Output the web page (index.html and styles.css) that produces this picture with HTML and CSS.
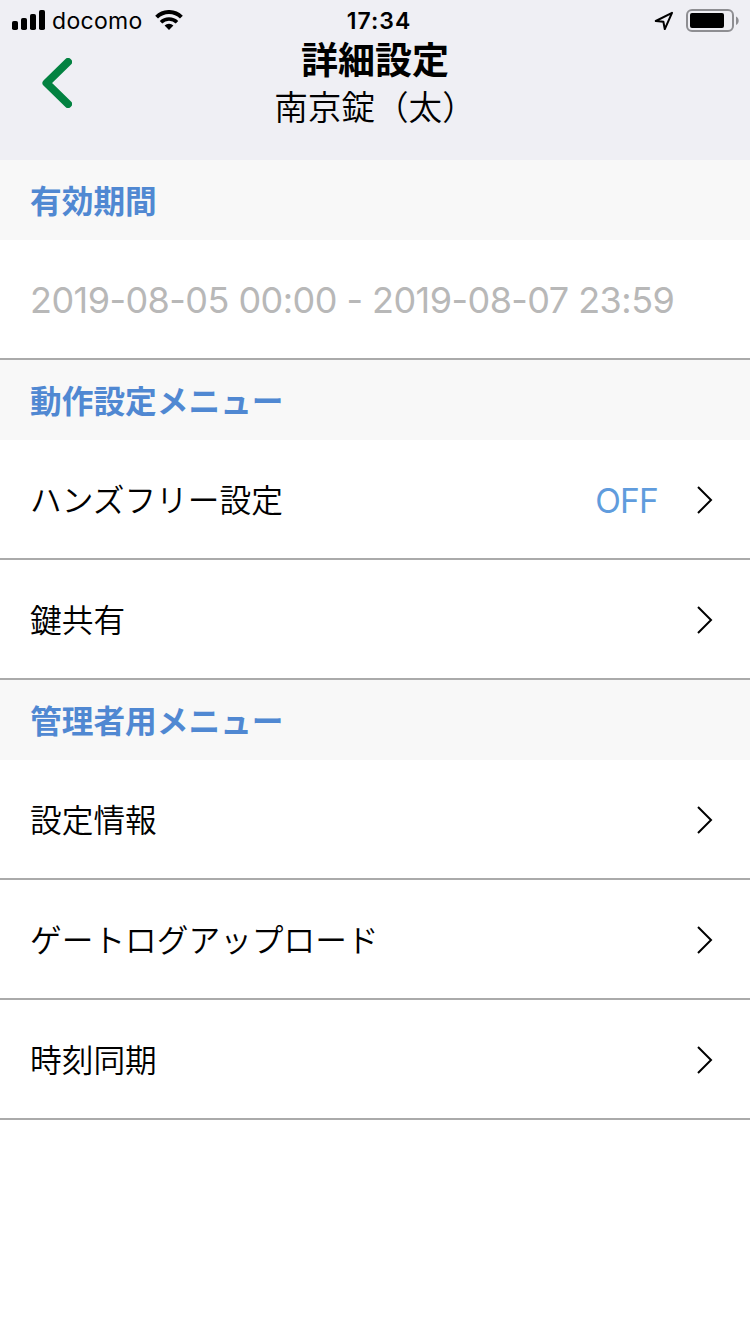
FILE: index.html
```
<!DOCTYPE html>
<html lang="ja">

<head>
    <title>詳細設定</title>
    <meta charset="utf-8">
    <meta name="viewport" content="width=device-width, initial-scale=1.0">
    <link rel="stylesheet" href="styles.css">
</head>

<body>
    <header>
        <div class="status">
            <div class="carrier">
                <svg class="signal" width="34" height="20" viewBox="0 0 34 20">
                    <rect x="0" y="11" width="6" height="9" rx="1.8" />
                    <rect x="9" y="8" width="6" height="12" rx="1.8" />
                    <rect x="18" y="4" width="6" height="16" rx="1.8" />
                    <rect x="27" y="0" width="6" height="20" rx="1.8" />
                </svg>
                <span>docomo</span>
                <svg class="wifi" width="28" height="20" viewBox="0 0 28 20">
                    <path d="M1.6 7.1a17.6 17.6 0 0 1 24.8 0" fill="none" stroke="#000" stroke-width="4" />
                    <path d="M6 12.200a11.500 11.500 0 0 1 16 0" fill="none" stroke="#000" stroke-width="3.6" />
                    <path d="M14 20l-4.400-4.400a6.200 6.200 0 0 1 8.800 0z" />
                </svg>
            </div>
            <time>17:34</time>
            <div class="power">
                <svg class="location" width="20" height="20" viewBox="0 0 20 20">
                    <path d="M18 2.800L1.800 11l7.600 0.800L10.800 19.200z" fill="none" stroke="#000" stroke-width="2" stroke-linejoin="round" />
                </svg>
                <svg class="battery" width="54" height="24" viewBox="0 0 54 24">
                    <rect x="1" y="2" width="46" height="21" rx="5" fill="none" stroke="#8e8e92" stroke-width="2" />
                    <rect x="4" y="5" width="34" height="15" rx="2" />
                    <path d="M50 8.500c3.600 1.200 3.600 7.300 0 8.500z" fill="#8e8e92" />
                </svg>
            </div>
        </div>
        <div class="titlebar">
            <a class="back" href="#" aria-label="戻る">
                <svg width="30" height="50" viewBox="0 0 30 50">
                    <path d="M26 4L4.500 25L26 46" fill="none" stroke="#038241" stroke-width="8" stroke-linecap="round" stroke-linejoin="round" />
                </svg>
            </a>
            <div class="titles">
                <h1>詳細設定</h1>
                <p>南京錠（太）</p>
            </div>
        </div>
    </header>

    <main>
        <h2>有効期間</h2>
        <div class="row period">2019-08-05 00:00 - 2019-08-07 23:59</div>

        <h2>動作設定メニュー</h2>
        <a class="row" href="#">
            <span class="label">ハンズフリー設定</span>
            <span class="value">OFF</span>
            <svg class="arrow" viewBox="0 0 16 28"><path d="M1 1l13 13L1 27" /></svg>
        </a>
        <a class="row" href="#">
            <span class="label">鍵共有</span>
            <svg class="arrow" viewBox="0 0 16 28"><path d="M1 1l13 13L1 27" /></svg>
        </a>

        <h2>管理者用メニュー</h2>
        <a class="row" href="#">
            <span class="label">設定情報</span>
            <svg class="arrow" viewBox="0 0 16 28"><path d="M1 1l13 13L1 27" /></svg>
        </a>
        <a class="row" href="#">
            <span class="label">ゲートログアップロード</span>
            <svg class="arrow" viewBox="0 0 16 28"><path d="M1 1l13 13L1 27" /></svg>
        </a>
        <a class="row" href="#">
            <span class="label">時刻同期</span>
            <svg class="arrow" viewBox="0 0 16 28"><path d="M1 1l13 13L1 27" /></svg>
        </a>
    </main>
</body>

</html>
```
FILE: styles.css
```
* {
    box-sizing: border-box;
}

body {
    margin: 0;
    background: white;
    color: black;
    font-family: Inter, "Noto Sans CJK JP", sans-serif;
}

svg {
    display: block;
    flex: none;
}

header {
    height: 160px;
    background: #efeff4;
}

.status {
    display: grid;
    grid-template-columns: 1fr auto 1fr;
    align-items: center;
    height: 40px;
    padding: 0 10px 0 12px;
    font-size: 23px;
    line-height: 38px;
}

.status span,
.status time {
    padding-top: 2px;
}

.status time {
    font-weight: 600;
    letter-spacing: 1px;
    padding-left: 6px;
}

.carrier {
    display: flex;
    align-items: center;
    gap: 6px;
}

.carrier span {
    letter-spacing: 0.3px;
}

.wifi {
    margin-left: 6px;
}

.power {
    display: flex;
    align-items: center;
    justify-content: flex-end;
    gap: 12px;
}

.titlebar {
    display: grid;
    grid-template-columns: 120px 1fr 120px;
}

.back {
    padding: 18px 0 0 42px;
}

.titles {
    text-align: center;
}

h1 {
    margin: 0;
    font-size: 37px;
    line-height: 42px;
    font-weight: 700;
}

.titles p {
    margin: 0;
    font-size: 33.6px;
    line-height: 52px;
    font-weight: 350;
}

h2 {
    margin: 0;
    height: 80px;
    padding-left: 30px;
    background: #f8f8f8;
    color: #5088d2;
    font-size: 31.7px;
    line-height: 84px;
    font-weight: 700;
}

.row {
    display: flex;
    align-items: center;
    height: 120px;
    padding: 2px 37px 0 30px;
    border-bottom: 2px solid #aaa;
    color: black;
    font-size: 31.7px;
    font-weight: 350;
    text-decoration: none;
}

.label {
    padding-bottom: 4px;
}

.period {
    color: #b8b8b8;
    font-size: 36px;
    font-weight: 400;
    letter-spacing: -0.55px;
}

.value {
    margin-left: auto;
    padding-top: 2px;
    color: #609cdd;
    font-size: 33.5px;
    font-weight: 400;
    letter-spacing: -0.8px;
}

.arrow {
    width: 16px;
    height: 28px;
    margin-left: auto;
    fill: none;
    stroke: black;
    stroke-width: 2;
}

.value + .arrow {
    margin-left: 39px;
}
```
